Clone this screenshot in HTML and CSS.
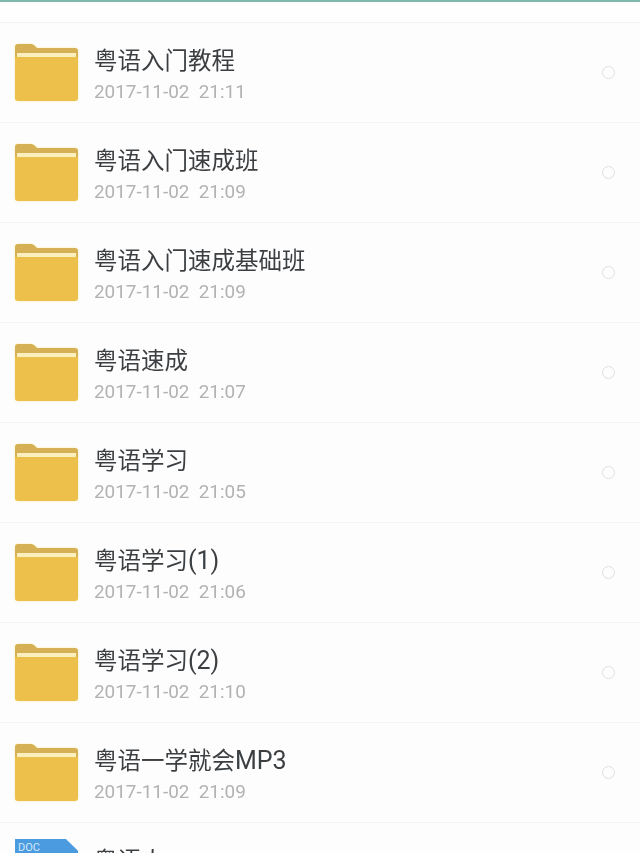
FILE: index.html
```html
<!DOCTYPE html>
<html lang="en">
<head>
    <meta charset="UTF-8">
    <meta name="viewport" content="width=device-width, initial-scale=1.0">
    <title>File List</title>
    <link rel="stylesheet" href="styles.css">
</head>
<body>

    <svg class="icon-defs" width="0" height="0">
        <symbol id="folder" viewBox="0 0 63 57">
            <path d="M0 3a3 3 0 0 1 3-3h13c2 0 3 1 4 2l2 2h38a3 3 0 0 1 3 3v46a3 3 0 0 1-3 3H3a3 3 0 0 1-3-3z" fill="#d5b055"/>
            <rect x="2" y="9" width="59" height="4" fill="#fbefbd"/>
            <path d="M0 13h63v41a3 3 0 0 1-3 3H3a3 3 0 0 1-3-3z" fill="#edc04b"/>
        </symbol>
    </svg>

    <div class="top-line"></div>
    <div class="top-bar"></div>

    <ul class="file-list">
        <li class="file-row">
            <svg class="file-icon"><use href="#folder"/></svg>
            <div class="file-info">
                <div class="file-name">粤语入门教程</div>
                <div class="file-date">2017-11-02&nbsp; 21:11</div>
            </div>
            <span class="radio"></span>
        </li>
        <li class="file-row">
            <svg class="file-icon"><use href="#folder"/></svg>
            <div class="file-info">
                <div class="file-name">粤语入门速成班</div>
                <div class="file-date">2017-11-02&nbsp; 21:09</div>
            </div>
            <span class="radio"></span>
        </li>
        <li class="file-row">
            <svg class="file-icon"><use href="#folder"/></svg>
            <div class="file-info">
                <div class="file-name">粤语入门速成基础班</div>
                <div class="file-date">2017-11-02&nbsp; 21:09</div>
            </div>
            <span class="radio"></span>
        </li>
        <li class="file-row">
            <svg class="file-icon"><use href="#folder"/></svg>
            <div class="file-info">
                <div class="file-name">粤语速成</div>
                <div class="file-date">2017-11-02&nbsp; 21:07</div>
            </div>
            <span class="radio"></span>
        </li>
        <li class="file-row">
            <svg class="file-icon"><use href="#folder"/></svg>
            <div class="file-info">
                <div class="file-name">粤语学习</div>
                <div class="file-date">2017-11-02&nbsp; 21:05</div>
            </div>
            <span class="radio"></span>
        </li>
        <li class="file-row">
            <svg class="file-icon"><use href="#folder"/></svg>
            <div class="file-info">
                <div class="file-name">粤语学习<span class="latin">(1)</span></div>
                <div class="file-date">2017-11-02&nbsp; 21:06</div>
            </div>
            <span class="radio"></span>
        </li>
        <li class="file-row">
            <svg class="file-icon"><use href="#folder"/></svg>
            <div class="file-info">
                <div class="file-name">粤语学习<span class="latin">(2)</span></div>
                <div class="file-date">2017-11-02&nbsp; 21:10</div>
            </div>
            <span class="radio"></span>
        </li>
        <li class="file-row">
            <svg class="file-icon"><use href="#folder"/></svg>
            <div class="file-info">
                <div class="file-name">粤语一学就会<span class="latin">MP3</span></div>
                <div class="file-date">2017-11-02&nbsp; 21:09</div>
            </div>
            <span class="radio"></span>
        </li>
        <li class="file-row">
            <div class="doc-icon">DOC</div>
            <div class="file-info">
                <div class="file-name">粤语人</div>
                <div class="file-date">2017-11-02&nbsp; 21:09</div>
            </div>
            <span class="radio"></span>
        </li>
    </ul>

</body>
</html>
```

FILE: styles.css
```css
/* General styling */
html, body {
    height: 853px;
    overflow: hidden;
}

body {
    font-family: 'Roboto', 'Noto Sans CJK SC', sans-serif;
    margin: 0;
    padding: 0;
    background-color: #fdfdfd;
}

.icon-defs {
    display: block;
    height: 0;
}

.top-line {
    height: 2px;
    background-color: #7fb8ab;
}

.top-bar {
    height: 20px;
    background-color: #fefefe;
    border-bottom: 1px solid #f3f3f3;
}

.file-list {
    list-style: none;
    margin: 0;
    padding: 0;
    filter: blur(0.4px);
}

.file-row {
    display: flex;
    align-items: center;
    height: 99px;
    padding: 0 25px 0 15px;
    border-bottom: 1px solid #f5f5f5;
}

.file-icon {
    flex: none;
    width: 63px;
    height: 57px;
    margin-bottom: 1px;
    filter: drop-shadow(0 0 1px #fbeeb0);
}

.file-info {
    flex: 1;
    margin-left: 16px;
    padding-top: 4px;
}

.file-name {
    font-size: 23.5px;
    line-height: 30px;
    color: #3c3f42;
}

.file-name .latin {
    font-size: 25px;
}

.file-date {
    font-size: 18.9px;
    line-height: 24px;
    margin-top: 4px;
    color: #b2b2b2;
}

.radio {
    flex: none;
    width: 11px;
    height: 11px;
    border: 1.5px solid #dedede;
    border-radius: 50%;
}

.doc-icon {
    flex: none;
    width: 63px;
    height: 68px;
    padding: 2px 0 0 3px;
    box-sizing: border-box;
    font-size: 11px;
    color: #d5e9f8;
    background-color: #4a9be0;
    clip-path: polygon(0 0, 80% 0, 100% 18%, 100% 100%, 0 100%);
}
```
